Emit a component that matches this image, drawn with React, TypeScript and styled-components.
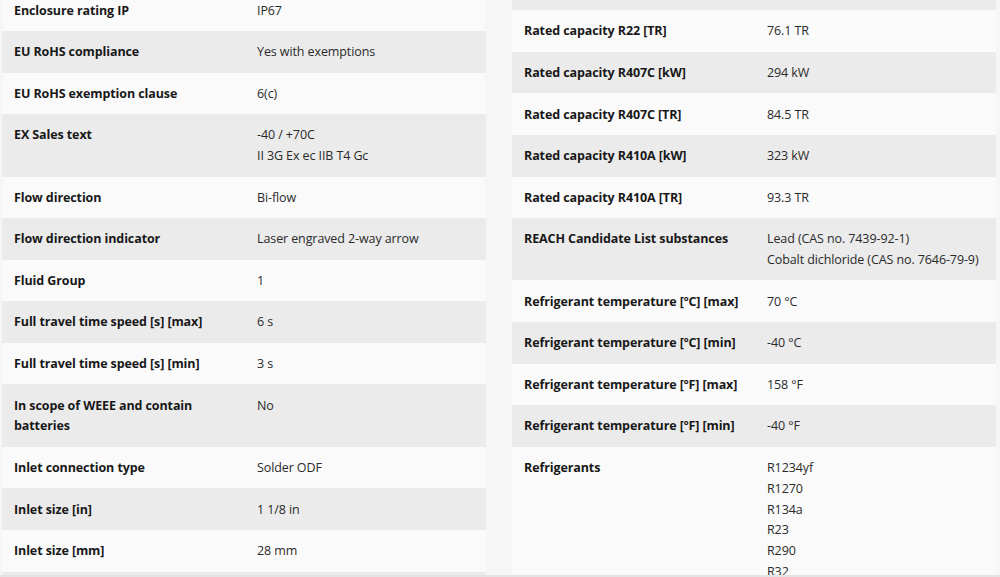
import React from "react";
import styled, { createGlobalStyle } from "styled-components";

const GlobalStyle = createGlobalStyle`
  html, body {
    margin: 0;
    padding: 0;
    background: #f6f6f6;
  }
  body {
    font-family: "Open Sans", "Noto Sans", "Liberation Sans", sans-serif;
    -webkit-font-smoothing: antialiased;
  }
`;

type Spec = { label: string; values: string[] };

const leftSpecs: Spec[] = [
  { label: "Enclosure rating IP", values: ["IP67"] },
  { label: "EU RoHS compliance", values: ["Yes with exemptions"] },
  { label: "EU RoHS exemption clause", values: ["6(c)"] },
  { label: "EX Sales text", values: ["-40 / +70C", "II 3G Ex ec IIB T4 Gc"] },
  { label: "Flow direction", values: ["Bi-flow"] },
  { label: "Flow direction indicator", values: ["Laser engraved 2-way arrow"] },
  { label: "Fluid Group", values: ["1"] },
  { label: "Full travel time speed [s] [max]", values: ["6 s"] },
  { label: "Full travel time speed [s] [min]", values: ["3 s"] },
  { label: "In scope of WEEE and contain batteries", values: ["No"] },
  { label: "Inlet connection type", values: ["Solder ODF"] },
  { label: "Inlet size [in]", values: ["1 1/8 in"] },
  { label: "Inlet size [mm]", values: ["28 mm"] },
  { label: "Outlet connection type", values: ["Solder ODF"] },
];

const rightSpecs: Spec[] = [
  { label: "Rated capacity R22 [kW]", values: ["268 kW"] },
  { label: "Rated capacity R22 [TR]", values: ["76.1 TR"] },
  { label: "Rated capacity R407C [kW]", values: ["294 kW"] },
  { label: "Rated capacity R407C [TR]", values: ["84.5 TR"] },
  { label: "Rated capacity R410A [kW]", values: ["323 kW"] },
  { label: "Rated capacity R410A [TR]", values: ["93.3 TR"] },
  {
    label: "REACH Candidate List substances",
    values: ["Lead (CAS no. 7439-92-1)", "Cobalt dichloride (CAS no. 7646-79-9)"],
  },
  { label: "Refrigerant temperature [\u00baC] [max]", values: ["70 \u00b0C"] },
  { label: "Refrigerant temperature [\u00baC] [min]", values: ["-40 \u00b0C"] },
  { label: "Refrigerant temperature [\u00baF] [max]", values: ["158 \u00b0F"] },
  { label: "Refrigerant temperature [\u00baF] [min]", values: ["-40 \u00b0F"] },
  {
    label: "Refrigerants",
    values: ["R1234yf", "R1270", "R134a", "R23", "R290", "R32", "R404A", "R407C"],
  },
];

const Viewport = styled.div`
  height: 575px;
  overflow: hidden;
  border-bottom: 2px solid #e3e3e3;
  background: #f6f6f6;
`;

const Columns = styled.div`
  display: flex;
  align-items: flex-start;
  gap: 26px;
  padding: 0 4px 0 2px;
`;

const Table = styled.div<{ $offset: number }>`
  flex: 1 1 0;
  min-width: 0;
  display: flex;
  flex-direction: column;
  margin-top: ${(p) => p.$offset}px;
`;

const Row = styled.div<{ $shaded: boolean }>`
  display: grid;
  grid-template-columns: 1fr 1fr;
  background: ${(p) => (p.$shaded ? "#ebebeb" : "#fafafa")};
`;

const Cell = styled.div`
  padding: 11.2px 12px 9.6px;
  font-size: 12.5px;
  line-height: 20.8px;
  letter-spacing: -0.1px;
`;

const Label = styled(Cell)`
  padding-right: 2px;
  font-weight: 700;
  color: #181818;
`;

const Value = styled(Cell)`
  padding-left: 13px;
  font-weight: 400;
  color: #2a2a2a;
`;

const Line = styled.div`
  white-space: nowrap;
`;

function SpecTable({
  specs,
  offset,
  firstShaded,
}: {
  specs: Spec[];
  offset: number;
  firstShaded: boolean;
}) {
  return (
    <Table $offset={offset}>
      {specs.map((s, i) => (
        <Row key={s.label} $shaded={(i % 2 === 0) === firstShaded}>
          <Label>{s.label}</Label>
          <Value>
            {s.values.map((v) => (
              <Line key={v}>{v}</Line>
            ))}
          </Value>
        </Row>
      ))}
    </Table>
  );
}

export default function App() {
  return (
    <>
      <GlobalStyle />
      <Viewport>
        <Columns>
          <SpecTable specs={leftSpecs} offset={-10.6} firstShaded={false} />
          <SpecTable specs={rightSpecs} offset={-31.4} firstShaded={true} />
        </Columns>
      </Viewport>
    </>
  );
}
